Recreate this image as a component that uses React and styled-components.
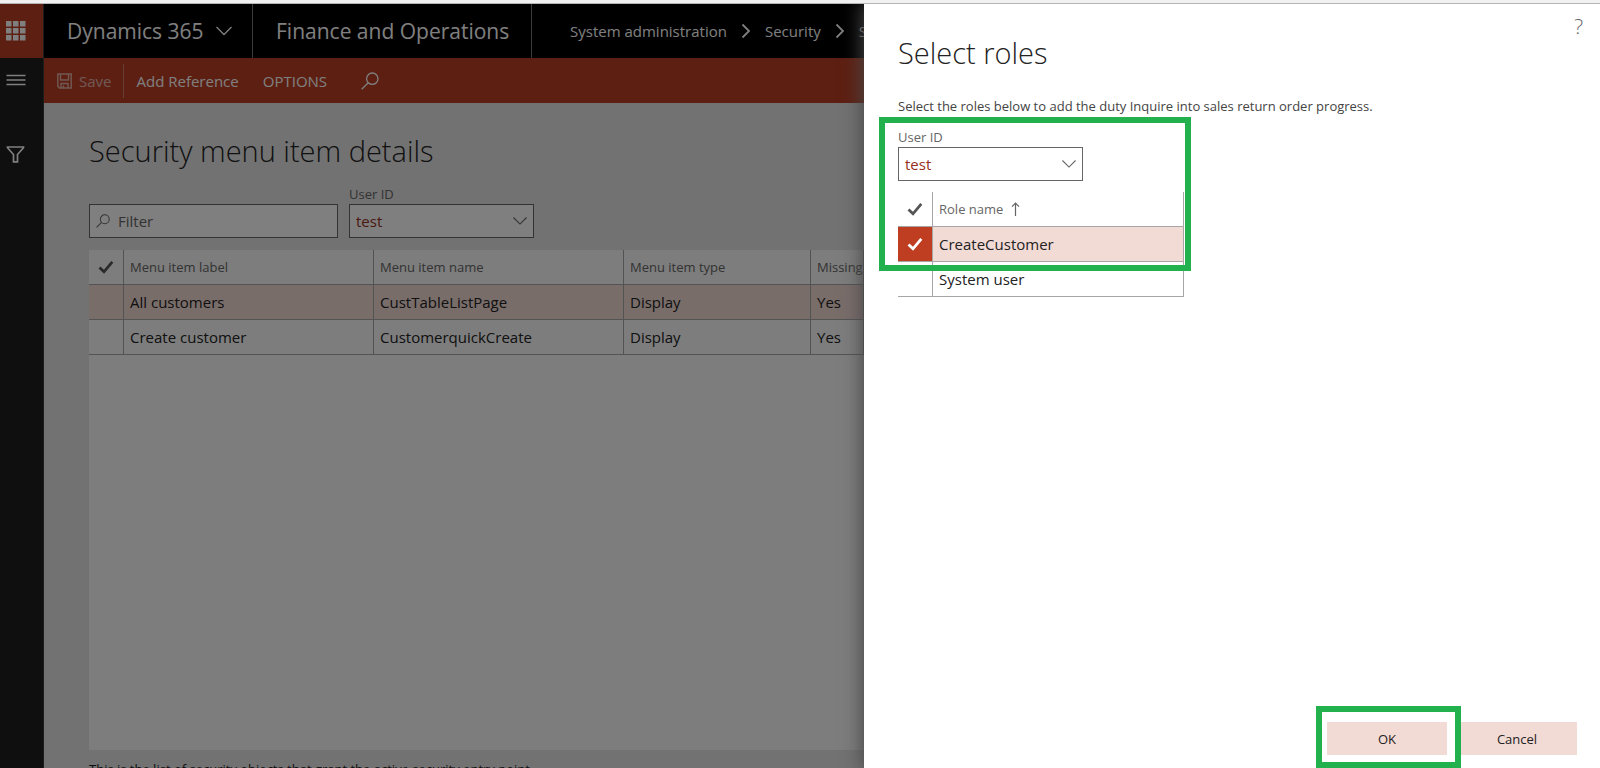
import React from "react";
import styled, { createGlobalStyle } from "styled-components";

const GlobalStyle = createGlobalStyle`
  * { box-sizing: border-box; }
  body { margin: 0; font-family: "Open Sans", "Noto Sans", sans-serif; font-size: 15px; color: #222; background: #fff; }
  button, input, select { font: inherit; color: inherit; margin: 0; }
  h1, p { margin: 0; }
  a { color: inherit; text-decoration: none; }
  svg { flex: none; }
`;

const Page = styled.div`
  display: flex;
  flex-direction: column;
  height: 100vh;
  overflow: hidden;
`;
const BrowserEdge = styled.div`
  flex: none;
  height: 4px;
  background: #f1f1f1;
  border-bottom: 1px solid #b5b5b5;
`;
const Body = styled.div`
  flex: 1;
  display: flex;
  min-height: 0;
`;

const Workspace = styled.div`
  position: relative;
  flex: 1;
  min-width: 0;
  display: flex;
  overflow: hidden;
`;
const Dimmer = styled.div`
  position: absolute;
  inset: 0;
  background: rgba(0, 0, 0, 0.5);
`;

const Rail = styled.nav`
  flex: none;
  width: 44px;
  display: flex;
  flex-direction: column;
  background: #1e1e1e;
  border-right: 1px solid #3a3a3a;
`;
const RailButton = styled.button`
  display: flex;
  align-items: center;
  height: ${(p) => p.$height}px;
  padding: 0 0 0 6px;
  border: 0;
  color: #fff;
  background: ${(p) => (p.$accent ? "#ba3e25" : "transparent")};
`;
const RailGap = styled.div`
  height: 40px;
`;

const Main = styled.div`
  flex: 1;
  min-width: 0;
  display: flex;
  flex-direction: column;
`;
const TopBar = styled.header`
  flex: none;
  height: 54px;
  display: flex;
  align-items: center;
  color: #fff;
  background: #000;
  white-space: nowrap;
`;
const Brand = styled.button`
  flex: none;
  align-self: stretch;
  display: flex;
  align-items: center;
  gap: 12px;
  padding: 0 23px;
  width: ${(p) => p.$width}px;
  font-size: 21px;
  text-align: left;
  background: transparent;
  border: 0;
  border-right: 1px solid #777;
`;
const Crumbs = styled.nav`
  flex: 1;
  display: flex;
  align-items: center;
  gap: 14px;
  padding-left: 38px;
  overflow: hidden;
`;

const ActionBar = styled.div`
  flex: none;
  height: 45px;
  display: flex;
  align-items: center;
  padding-left: 1px;
  color: #fff;
  background: #ba3e25;
`;
const Action = styled.button`
  display: flex;
  align-items: center;
  gap: 7px;
  height: 34px;
  padding: 0 ${(p) => (p.$wide ? 22 : 12)}px;
  border: 0;
  background: transparent;
  opacity: ${(p) => (p.disabled ? 0.6 : 1)};
`;
const ActionDivider = styled.span`
  width: 1px;
  height: 34px;
  background: #cf7c66;
`;

const Content = styled.main`
  flex: 1;
  min-height: 0;
  display: flex;
  flex-direction: column;
  padding: 27px 0 0 45px;
  background: #e5e5e5;
`;
const Title = styled.h1`
  font-size: 29px;
  line-height: 42px;
  font-weight: 300;
`;
const Filters = styled.div`
  display: flex;
  align-items: flex-end;
  gap: 11px;
  padding: 12px 0;
`;
const Field = styled.div`
  display: flex;
  flex-direction: column;
  width: 185px;
`;
const Label = styled.label`
  font-size: 13px;
  line-height: 20px;
  color: #666;
`;
const Box = styled.div`
  display: flex;
  align-items: center;
  gap: 8px;
  width: ${(p) => p.$width || "100%"};
  height: 34px;
  padding: 0 6px;
  color: #666;
  background: #fff;
  border: 1px solid #666;
`;
const TextInput = styled.input`
  flex: 1;
  min-width: 0;
  border: 0;
  padding: 0;
  outline: 0;
  background: transparent;
  &::placeholder { color: #666; opacity: 1; }
`;
const Picker = styled.select`
  flex: 1;
  appearance: none;
  border: 0;
  padding: 0;
  outline: 0;
  color: #96301c;
  background: transparent;
`;

const GridArea = styled.div`
  flex: 1;
  background: #fafafa;
`;
const Table = styled.table`
  width: 100%;
  table-layout: fixed;
  border-collapse: separate;
  border-spacing: 0;
`;
const Th = styled.th`
  height: 35px;
  padding: 0 6px;
  font-size: 13px;
  font-weight: 400;
  text-align: left;
  white-space: nowrap;
  overflow: hidden;
  color: #666;
  border-right: 1px solid #a6a6a6;
  border-bottom: 1px solid #a6a6a6;
`;
const Td = styled.td`
  height: 35px;
  padding: 0 6px;
  line-height: 20px;
  white-space: nowrap;
  background: ${(p) => (p.$selected ? "#f2dad5" : "transparent")};
  border-right: 1px solid #a6a6a6;
  border-bottom: 1px solid #a6a6a6;
`;
const Tick = styled.label`
  display: grid;
  place-items: center;
  height: 34px;
  margin: 0 -6px;
  color: ${(p) => (p.$on ? "#fff" : "#555")};
  background: ${(p) => (p.$on ? "#bf3d20" : "transparent")};
  & > * { grid-area: 1 / 1; }
`;
const TickInput = styled.input.attrs({ type: "checkbox" })`
  appearance: none;
  width: 100%;
  height: 100%;
`;
const FootNote = styled.p`
  flex: none;
  height: 18px;
  padding-top: 9px;
  font-size: 13px;
  line-height: 20px;
  white-space: nowrap;
`;

const Panel = styled.aside`
  position: relative;
  flex: none;
  width: 46%;
  display: flex;
  flex-direction: column;
  padding: 28px 23px 13px 34px;
  background: #fff;
  box-shadow: 0 0 18px 2px #484848;
  clip-path: inset(0 0 0 -30px);
`;
const HelpButton = styled.button`
  position: absolute;
  top: 10px;
  right: 17px;
  padding: 0;
  border: 0;
  font-size: 21px;
  line-height: 24px;
  font-weight: 300;
  color: #666;
  background: transparent;
`;
const Intro = styled.p`
  padding: 22px 0 11px;
  font-size: 13px;
  line-height: 20px;
  color: #444;
`;
const RoleForm = styled.form`
  position: relative;
  width: 286px;
`;
const RoleGrid = styled.div`
  padding-top: 11px;
`;
const Highlight = styled.div`
  position: absolute;
  inset: ${(p) => p.$inset};
  border: 6px solid #22b14c;
  pointer-events: none;
`;
const Buttons = styled.div`
  display: flex;
  justify-content: flex-end;
  gap: 10px;
  margin-top: auto;
`;
const ButtonSlot = styled.div`
  position: relative;
`;
const DialogButton = styled.button`
  width: 120px;
  height: 33px;
  border: 0;
  font-size: 13px;
  font-weight: 500;
  color: #222;
  background: #f2dad5;
`;

const ChevronDown = ({ size = 16 }) => (
  <svg width={size} height={size} viewBox="0 0 16 16" fill="none" stroke="currentColor" strokeWidth="1.3">
    <path d="M.5 4 8 11.5 15.5 4" />
  </svg>
);

const ChevronRight = () => (
  <svg width="10" height="16" viewBox="0 0 10 16" fill="none" stroke="currentColor" strokeWidth="1.8">
    <path d="M1.5 1.5 8 8 1.5 14.5" />
  </svg>
);

const SearchIcon = ({ size = 18 }) => (
  <svg width={size} height={size} viewBox="0 0 18 18" fill="none" stroke="currentColor" strokeWidth="1.3">
    <circle cx="11.3" cy="6.7" r="5.7" />
    <path d="M7.2 10.8.7 17.3" />
  </svg>
);

const CheckIcon = () => (
  <svg width="16" height="14" viewBox="0 0 16 14" fill="none" stroke="currentColor" strokeWidth="2.8">
    <path d="M1.5 7.5 6 11.8 14.3 1.8" />
  </svg>
);

const WaffleIcon = () => (
  <svg width="20" height="20" viewBox="0 0 20 20" fill="currentColor">
    {[0, 7, 14].map((y) =>
      [0, 7, 14].map((x) => <rect key={`${x}-${y}`} x={x} y={y} width="5.5" height="5.5" />)
    )}
  </svg>
);

const MenuIcon = () => (
  <svg width="20" height="12" viewBox="0 0 20 12" stroke="currentColor" strokeWidth="1.4">
    <path d="M.5 1.5h19M.5 6h19M.5 10.5h19" />
  </svg>
);

const FunnelIcon = () => (
  <svg width="19" height="17" viewBox="0 0 19 17" fill="none" stroke="currentColor" strokeWidth="1.7">
    <path d="M1.5 1h16v.8l-6 6.7v7.3h-4V8.5L1.5 1.800z" />
  </svg>
);

const SaveIcon = () => (
  <svg width="15" height="16" viewBox="0 0 15 16" fill="none" stroke="currentColor" strokeWidth="1.4">
    <path d="M.8 1h13.4v14H2.5L.8 13.3zM3.5 1v6h8V1M4 15v-4.500h7V15M6.500 12.500V15" />
  </svg>
);

const ArrowUp = () => (
  <svg width="9" height="14" viewBox="0 0 9 14" fill="none" stroke="currentColor" strokeWidth="1.2">
    <path d="M4.5 14V1.2M1 4.7l3.5-3.5L8 4.7" />
  </svg>
);

const SortLabel = styled.span`
  display: flex;
  align-items: center;
  gap: 8px;
`;

const menuItems = [
  { label: "All customers", name: "CustTableListPage", type: "Display", missing: "Yes" },
  { label: "Create customer", name: "CustomerquickCreate", type: "Display", missing: "Yes" },
];

const roles = [
  { name: "CreateCustomer", selected: true },
  { name: "System user", selected: false },
];

const TickBox = ({ on, name, icon }) => (
  <Tick $on={on}>
    <TickInput defaultChecked={on} aria-label={name} />
    {icon && <CheckIcon />}
  </Tick>
);

const UserField = ({ id }) => (
  <Field>
    <Label htmlFor={id}>User ID</Label>
    <Box>
      <Picker id={id} defaultValue="test">
        <option>test</option>
      </Picker>
      <ChevronDown size={14} />
    </Box>
  </Field>
);

const MenuItemTable = () => (
  <Table>
    <colgroup>
      <col width="35" />
      <col width="250" />
      <col width="250" />
      <col width="187" />
      <col />
    </colgroup>
    <thead>
      <tr>
        <Th><TickBox name="Select all menu items" icon /></Th>
        <Th>Menu item label</Th>
        <Th>Menu item name</Th>
        <Th>Menu item type</Th>
        <Th>Missing</Th>
      </tr>
    </thead>
    <tbody>
      {menuItems.map((item, i) => (
        <tr key={item.name}>
          <Td $selected={i === 0}><TickBox name={item.label} /></Td>
          <Td $selected={i === 0}>{item.label}</Td>
          <Td $selected={i === 0}>{item.name}</Td>
          <Td $selected={i === 0}>{item.type}</Td>
          <Td $selected={i === 0}>{item.missing}</Td>
        </tr>
      ))}
    </tbody>
  </Table>
);

const RoleTable = () => (
  <Table>
    <colgroup>
      <col width="35" />
      <col />
    </colgroup>
    <thead>
      <tr>
        <Th><TickBox name="Select all roles" icon /></Th>
        <Th><SortLabel>Role name <ArrowUp /></SortLabel></Th>
      </tr>
    </thead>
    <tbody>
      {roles.map((role) => (
        <tr key={role.name}>
          <Td><TickBox name={role.name} on={role.selected} icon={role.selected} /></Td>
          <Td $selected={role.selected}>{role.name}</Td>
        </tr>
      ))}
    </tbody>
  </Table>
);

const App = () => {
  return (
    <Page>
      <GlobalStyle />
      <BrowserEdge />
      <Body>
        <Workspace>
          <Rail>
            <RailButton $height={54} $accent aria-label="Apps"><WaffleIcon /></RailButton>
            <RailButton $height={44} aria-label="Menu"><MenuIcon /></RailButton>
            <RailGap />
            <RailButton $height={24} aria-label="Filter pane"><FunnelIcon /></RailButton>
          </Rail>
          <Main>
            <TopBar>
              <Brand $width={209}>Dynamics 365 <ChevronDown /></Brand>
              <Brand $width={279}>Finance and Operations</Brand>
              <Crumbs>
                <a href="#admin">System administration</a>
                <ChevronRight />
                <a href="#security">Security</a>
                <ChevronRight />
                <a href="#details">S</a>
              </Crumbs>
            </TopBar>
            <ActionBar>
              <Action disabled><SaveIcon /> Save</Action>
              <ActionDivider />
              <Action>Add Reference</Action>
              <Action>OPTIONS</Action>
              <Action $wide aria-label="Search"><SearchIcon /></Action>
            </ActionBar>
            <Content>
              <Title>Security menu item details</Title>
              <Filters>
                <Box $width="249px">
                  <SearchIcon size={14} />
                  <TextInput placeholder="Filter" aria-label="Filter" />
                </Box>
                <UserField id="page-user" />
              </Filters>
              <GridArea>
                <MenuItemTable />
              </GridArea>
              <FootNote>This is the list of security objects that grant the active security entry point</FootNote>
            </Content>
          </Main>
          <Dimmer />
        </Workspace>
        <Panel>
          <Title>Select roles</Title>
          <HelpButton aria-label="Help">?</HelpButton>
          <Intro>Select the roles below to add the duty Inquire into sales return order progress.</Intro>
          <RoleForm>
            <UserField id="role-user" />
            <RoleGrid>
              <RoleTable />
            </RoleGrid>
            <Highlight $inset="-10px -7px 26px -19px" />
          </RoleForm>
          <Buttons>
            <ButtonSlot>
              <DialogButton>OK</DialogButton>
              <Highlight $inset="-16px -14px -13px -11px" />
            </ButtonSlot>
            <DialogButton>Cancel</DialogButton>
          </Buttons>
        </Panel>
      </Body>
    </Page>
  );
};

export default App;
